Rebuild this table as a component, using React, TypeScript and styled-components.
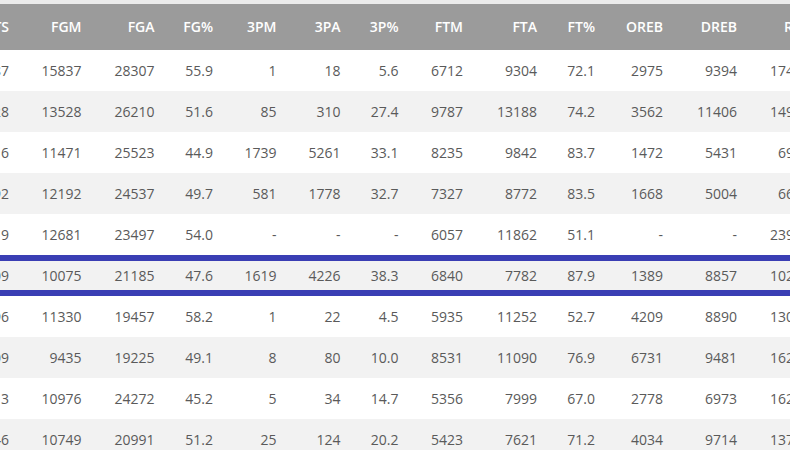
import React from "react";
import styled, { createGlobalStyle } from "styled-components";

const GlobalStyle = createGlobalStyle`
  html, body {
    margin: 0;
    padding: 0;
    background: #ebebeb;
    font-family: "Open Sans", "Noto Sans", sans-serif;
  }
  #root { width: 790px; height: 450px; overflow: hidden; }
`;

type Col = { key: string; width: number };

const columns: Col[] = [
  { key: "PTS", width: 73 },
  { key: "FGM", width: 72.5 },
  { key: "FGA", width: 73 },
  { key: "FG%", width: 58.5 },
  { key: "3PM", width: 63.5 },
  { key: "3PA", width: 64 },
  { key: "3P%", width: 58 },
  { key: "FTM", width: 64.5 },
  { key: "FTA", width: 74 },
  { key: "FT%", width: 58 },
  { key: "OREB", width: 68 },
  { key: "DREB", width: 74 },
  { key: "REB", width: 73 },
];

const rows: string[][] = [
  ["38387", "15837", "28307", "55.9", "1", "18", "5.6", "6712", "9304", "72.1", "2975", "9394", "17440"],
  ["36928", "13528", "26210", "51.6", "85", "310", "27.4", "9787", "13188", "74.2", "3562", "11406", "14968"],
  ["31616", "11471", "25523", "44.9", "1739", "5261", "33.1", "8235", "9842", "83.7", "1472", "5431", "6904"],
  ["32292", "12192", "24537", "49.7", "581", "1778", "32.7", "7327", "8772", "83.5", "1668", "5004", "6672"],
  ["31419", "12681", "23497", "54.0", "-", "-", "-", "6057", "11862", "51.1", "-", "-", "23924"],
  ["28609", "10075", "21185", "47.6", "1619", "4226", "38.3", "6840", "7782", "87.9", "1389", "8857", "10246"],
  ["28596", "11330", "19457", "58.2", "1", "22", "4.5", "5935", "11252", "52.7", "4209", "8890", "13099"],
  ["27409", "9435", "19225", "49.1", "8", "80", "10.0", "8531", "11090", "76.9", "6731", "9481", "16212"],
  ["27313", "10976", "24272", "45.2", "5", "34", "14.7", "5356", "7999", "67.0", "2778", "6973", "16279"],
  ["26946", "10749", "20991", "51.2", "25", "124", "20.2", "5423", "7621", "71.2", "4034", "9714", "13748"],
];

const HIGHLIGHT = 5;

const template = columns.map((c) => `${c.width}px`).join(" ");

const Viewport = styled.div`
  padding-top: 4px;
  overflow: hidden;
  width: 790px;
  height: 446px;
`;

const Table = styled.div`
  width: max-content;
  margin-left: -64px;
`;

const HeaderRow = styled.div`
  display: grid;
  grid-template-columns: ${template};
  height: 46px;
  align-items: center;
  background: #9b9b9b;
  color: #ffffff;
  font-size: 14px;
  font-weight: 600;
`;

const BodyRow = styled.div<{ $even: boolean; $highlight: boolean }>`
  display: grid;
  grid-template-columns: ${template};
  box-sizing: border-box;
  height: 41px;
  align-items: center;
  background: ${(p) => (p.$even || p.$highlight ? "#f2f2f2" : "#ffffff")};
  border-top: ${(p) => (p.$highlight ? "6px solid #3a3eb4" : "none")};
  border-bottom: ${(p) => (p.$highlight ? "6px solid #3a3eb4" : "none")};
  color: #5a5a5a;
  font-size: 14px;
`;

const Cell = styled.div`
  text-align: right;
  white-space: nowrap;
  line-height: 20px;
`;

export default function App() {
  return (
    <>
      <GlobalStyle />
      <Viewport>
        <Table>
          <HeaderRow>
            {columns.map((c) => (
              <Cell key={c.key}>{c.key}</Cell>
            ))}
          </HeaderRow>
          {rows.map((r, i) => (
            <BodyRow key={i} $even={i % 2 === 1} $highlight={i === HIGHLIGHT}>
              {r.map((v, j) => (
                <Cell key={j}>{v}</Cell>
              ))}
            </BodyRow>
          ))}
        </Table>
      </Viewport>
    </>
  );
}
